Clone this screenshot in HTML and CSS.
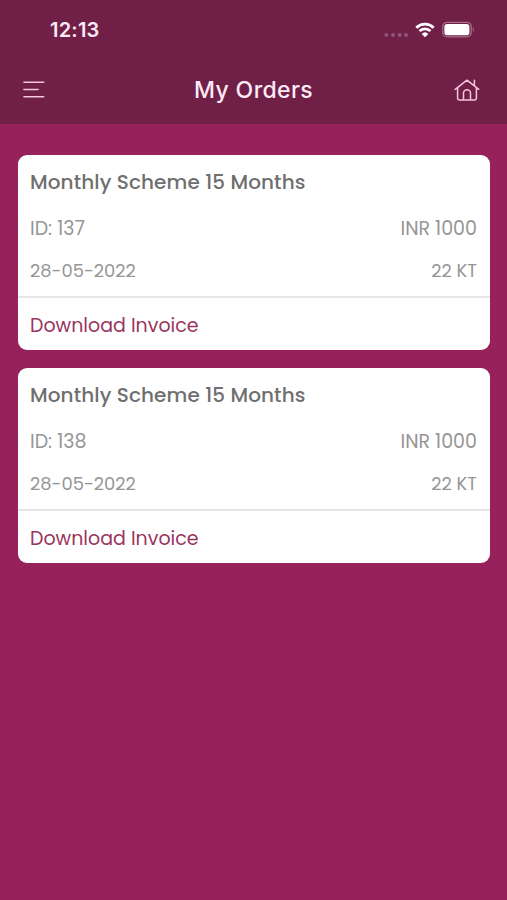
FILE: index.html
```
<!DOCTYPE html>
<html lang="en">
<head>
<meta charset="UTF-8">
<meta name="viewport" content="width=device-width, initial-scale=1.0">
<title>My Orders</title>
<link rel="stylesheet" href="styles.css">
</head>
<body>

<header class="header">
    <!-- Status bar -->
    <div class="status-bar">
        <span class="time">12:13</span>
        <div class="status-icons">
            <svg class="signal" width="24" height="16" viewBox="0 0 24 16">
                <circle cx="2.4" cy="13" r="2"/>
                <circle cx="9" cy="13" r="2"/>
                <circle cx="15.6" cy="13" r="2"/>
                <circle cx="22" cy="13" r="2"/>
            </svg>
            <svg class="wifi" width="20" height="16" viewBox="0 0 20 16">
                <path d="M1.3 5.7a12.6 12.6 0 0 1 17.4 0M4.5 9.1a8 8 0 0 1 11 0"/>
                <path class="wifi-dot" d="M10 15.2 6.7 11.9a4.8 4.8 0 0 1 6.6 0z"/>
            </svg>
            <svg class="battery" width="33" height="17" viewBox="0 0 33 17">
                <rect class="battery-case" x="0.8" y="1.3" width="28.4" height="14.6" rx="4.3"/>
                <rect x="2.4" y="3" width="25" height="11.2" rx="2.8"/>
                <path class="battery-cap" d="M30.8 6.3c1.5.5 1.5 4 0 4.5z"/>
            </svg>
        </div>
    </div>

    <!-- Title bar -->
    <div class="nav-bar">
        <svg class="icon" width="26" height="18" viewBox="0 0 26 18">
            <path d="M.9 1.2h19.8M.9 8.5h14.3M.9 15.7h19.8"/>
        </svg>
        <h1 class="page-title">My Orders</h1>
        <svg class="icon" width="26" height="24" viewBox="0 0 26 24">
            <path d="M1.2 11.3 13 2.2l11.8 9.1M20.4 7.8V2.2M3.6 9.6v10.6a1.8 1.8 0 0 0 1.8 1.8h15.2a1.8 1.8 0 0 0 1.8-1.8V9.6M9.5 22v-6.7a3.5 3.5 0 0 1 7 0V22"/>
        </svg>
    </div>
</header>

<!-- Orders list -->
<main class="orders">
    <div class="card">
        <div class="card-body">
            <h2 class="card-title">Monthly Scheme 15 Months</h2>
            <div class="card-row">
                <span class="order-id">ID: 137</span>
                <span class="amount">INR 1000</span>
            </div>
            <div class="card-row details">
                <span class="date">28-05-2022</span>
                <span class="karat">22 KT</span>
            </div>
        </div>
        <a href="#" class="download">Download Invoice</a>
    </div>

    <div class="card">
        <div class="card-body">
            <h2 class="card-title">Monthly Scheme 15 Months</h2>
            <div class="card-row">
                <span class="order-id">ID: 138</span>
                <span class="amount">INR 1000</span>
            </div>
            <div class="card-row details">
                <span class="date">28-05-2022</span>
                <span class="karat">22 KT</span>
            </div>
        </div>
        <a href="#" class="download">Download Invoice</a>
    </div>
</main>

</body>
</html>
```
FILE: styles.css
```
* {
box-sizing: border-box;
}

body {
margin: 0;
min-height: 100vh;
background-color: #96215b;
font-family: Poppins, Inter, sans-serif;
}

/* Header */
.header {
height: 124px;
background-color: #701f47;
color: #fdeaf6;
}

.status-bar {
display: flex;
justify-content: space-between;
align-items: center;
height: 59px;
padding: 0 32px 0 50px;
}

.time {
font-family: Inter, sans-serif;
font-size: 20px;
font-weight: 600;
letter-spacing: 0.2px;
}

.status-icons {
display: flex;
align-items: center;
gap: 7px;
fill: #fff;
}

.signal {
fill: #91547a;
}

.wifi {
fill: none;
stroke: #fff;
stroke-width: 2.8;
}

.wifi-dot {
fill: #fff;
stroke: none;
}

.battery-case {
fill: none;
stroke: #a56f8c;
stroke-width: 1.3;
}

.battery-cap {
fill: #a56f8c;
}

.nav-bar {
display: flex;
justify-content: space-between;
align-items: center;
height: 62px;
padding: 0 27px 0 23px;
}

.page-title {
margin: 0 0 0 4px;
font-family: Inter, sans-serif;
font-size: 23px;
font-weight: 500;
letter-spacing: 0.4px;
}

.icon {
fill: none;
stroke: #f6c5e2;
stroke-width: 1.5;
stroke-linecap: round;
stroke-linejoin: round;
}

/* Order cards */
.orders {
display: flex;
flex-direction: column;
gap: 18px;
padding: 31px 17px 0 18px;
}

.card {
height: 195px;
background-color: #fff;
border-radius: 9px;
}

.card-body {
height: 143px;
padding: 8px 13px 0 12px;
border-bottom: 2px solid #e6e6e6;
}

.card-title {
margin: 0 0 6px;
font-size: 20px;
font-weight: 500;
line-height: 38px;
letter-spacing: 0.1px;
color: #6f6f6f;
}

.card-row {
display: flex;
justify-content: space-between;
line-height: 43px;
font-size: 19px;
color: #969696;
}

.details {
line-height: 42px;
font-size: 17.9px;
}

.download {
display: block;
padding: 0 12px;
line-height: 55px;
font-size: 19px;
color: #9a3560;
text-decoration: none;
}
```
